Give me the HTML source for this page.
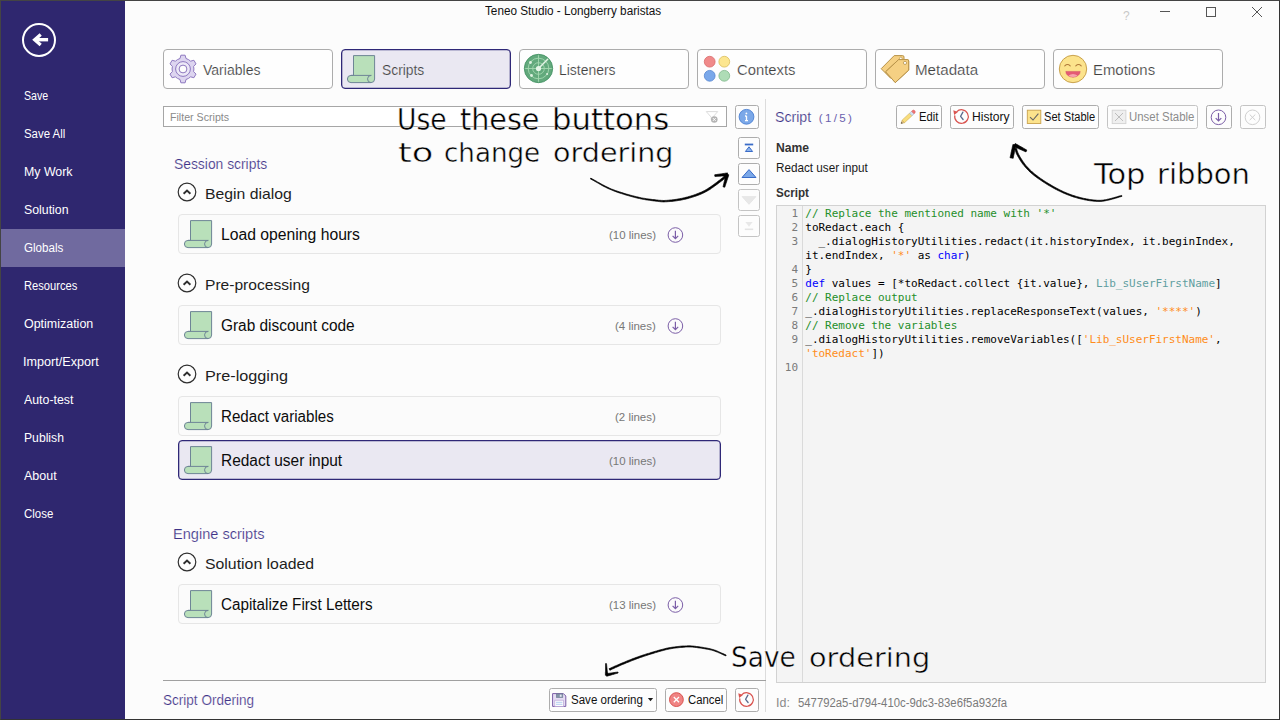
<!DOCTYPE html>
<html lang="en">
<head>
<meta charset="utf-8">
<title>Teneo Studio - Longberry baristas</title>
<style>
*{box-sizing:border-box;margin:0;padding:0}
html,body{width:1280px;height:720px;overflow:hidden;background:#fcfcfc}
body{font-family:"Liberation Sans","DejaVu Sans",sans-serif;color:#222;position:relative}
#win{position:absolute;left:0;top:0;width:1280px;height:720px;background:#fcfcfc;overflow:hidden}
#win div,#win svg,#win span{position:absolute}
#frame{left:0;top:0;width:1280px;height:720px;border:1px solid #444;border-right-color:#333;border-bottom-color:#333;pointer-events:none;z-index:50}
#side{left:1px;top:1px;width:124px;height:718px;background:#2f276f}
#side .sel{left:0;top:228px;width:124px;height:38px;background:#706a9f}
.t{white-space:pre;line-height:1;transform-origin:0 50%}
.tab{top:49px;width:170px;height:40px;border:1px solid #acacac;border-radius:4px;background:#fefefe}
.tab.on{border:1px solid #2f2877;background:#eae8f2;box-shadow:inset 0 0 0 .3px #2f2877}
.btn{border:1px solid #adadad;border-radius:2.5px;background:#fdfdfd}
.btn.dis{border-color:#c4c4c4}
.item{left:178px;width:543px;height:40px;border:1px solid #e6e6e6;border-radius:4px;background:#fbfbfb}
.item.on{border:1px solid #2f2877;background:#eae8f2;box-shadow:inset 0 0 0 .3px #2f2877}
#filter{left:163px;top:106px;width:564px;height:21px;border:1px solid #a6a6a6;background:#fff}
#vsep{left:765px;top:99px;width:1px;height:613px;background:#dcdcdc}
#hline{left:163px;top:680px;width:603px;height:1px;background:#a0a0a0}
#code{left:776px;top:205px;width:490px;height:478px;border:1px solid #d2d2d2;background:#f4f4f4}
#code .gsep{left:25px;top:0;width:1px;height:476px;background:#dadada}
.cl{white-space:pre;font-family:"DejaVu Sans Mono","Liberation Mono",monospace;font-size:11px;line-height:14px;height:14px;color:#000;letter-spacing:-0.015px}
.ln{color:#7a7a7a;text-align:right;width:22px;left:-1px}
.cm{color:#1f8f2a}.kw{color:#0000ff}.st{color:#ff8c1a}.lb{color:#5f9ea0}
.hand{font-family:"DejaVu Sans","Liberation Sans",sans-serif;color:#000;-webkit-text-stroke:0.45px #fcfcfc;white-space:pre;line-height:1;transform-origin:0 50%}
</style>
</head>
<body>
<div id="win">
  <div id="side"><div class="sel"></div>
    <svg style="left:18px;top:19px" width="40" height="40" viewBox="0 0 40 40"><circle cx="20" cy="20" r="16" fill="none" stroke="#fff" stroke-width="2"/><path d="M29.100 19.700H17" fill="none" stroke="#fff" stroke-width="3.400"/><path d="M21.700 14.500L15.700 19.700L21.700 24.900" fill="none" stroke="#fff" stroke-width="3.300" stroke-linejoin="miter"/></svg>
  </div>
  <!-- window controls -->
  <span class="t" style="left:1123px;top:10px;font-size:12px;color:#c8c8c8">?</span>
  <div style="left:1160px;top:11px;width:10px;height:1px;background:#555"></div>
  <div style="left:1206px;top:7px;width:10px;height:10px;border:1px solid #555"></div>
  <svg style="left:1251px;top:6px" width="12" height="12" viewBox="0 0 12 12"><path d="M1 1l10 10M11 1L1 11" stroke="#555" stroke-width="1" fill="none"/></svg>

  <!-- tabs -->
  <div class="tab" style="left:163px"></div>
  <div class="tab on" style="left:341px"></div>
  <div class="tab" style="left:519px"></div>
  <div class="tab" style="left:697px"></div>
  <div class="tab" style="left:875px"></div>
  <div class="tab" style="left:1053px"></div>
  <!-- gear -->
  <svg style="left:168px;top:54px" width="30" height="30" viewBox="-15 -15 30 30">
    <g fill="#ddd5f0" stroke="#8e78c0" stroke-width="1" stroke-linejoin="miter">
      <path d="M-3.00 -10.48L-2.10 -13.80L2.10 -13.80L3.00 -10.48A10.9 10.9 0 0 1 7.58 -7.84L10.90 -8.72L13.00 -5.08L10.58 -2.64A10.9 10.9 0 0 1 10.58 2.64L13.00 5.08L10.90 8.72L7.58 7.84A10.9 10.9 0 0 1 3.00 10.48L2.10 13.80L-2.10 13.80L-3.00 10.48A10.9 10.9 0 0 1 -7.58 7.84L-10.90 8.72L-13.00 5.08L-10.58 2.64A10.9 10.9 0 0 1 -10.58 -2.64L-13.00 -5.08L-10.90 -8.72L-7.58 -7.84A10.9 10.9 0 0 1 -3.00 -10.48Z"/>
      <circle r="7.400" fill="#ece8f7"/><circle r="3.900" fill="#fdfdfd"/>
    </g>
  </svg>
  <svg style="left:347px;top:55px" width="29" height="29" viewBox="0 0 29 29"><g fill="#b9e0ba" stroke="#6e8596" stroke-width="1" stroke-linejoin="round"><path d="M6.500 20.400V0.600H27.600V24a3.600 3.600 0 0 1 -3.600 3.600H4a3.600 3.600 0 0 1 0 -7.200Z"/><path d="M4 20.400H24.300M24.300 20.400a3.600 3.600 0 0 0 -0.300 7.200" fill="none"/></g></svg>
  <!-- radar -->
  <svg style="left:523px;top:53px" width="31" height="31" viewBox="-15.500 -15.500 31 31">
    <circle r="14.200" fill="#62a97c" stroke="#3f8f60" stroke-width="0.800"/>
    <g fill="none" stroke="#a4d8b0" stroke-width="0.900"><circle r="10.300"/><circle r="5.800"/><path d="M-13.300 0H13.300M0 -13.300V13.300"/></g>
    <path d="M0 0L9.200 -9.200" stroke="#e4f4e6" stroke-width="1.500" stroke-linecap="round"/>
    <circle r="2.600" fill="#e4f4e6"/><circle cx="-8" cy="-6" r="1.400" fill="#dff1e1"/><circle cx="-7" cy="7" r="1.400" fill="#dff1e1"/><circle cx="8.600" cy="5.600" r="1" fill="#dff1e1"/>
  </svg>
  <!-- contexts -->
  <svg style="left:703px;top:55px" width="28" height="28" viewBox="0 0 28 28">
    <circle cx="6.700" cy="6.700" r="5.400" fill="#f08a8a" stroke="#d96a6a" stroke-width="0.800"/>
    <circle cx="21.300" cy="6.700" r="5.400" fill="#fce68f" stroke="#d9bd5a" stroke-width="0.800"/>
    <circle cx="6.700" cy="20.800" r="5.400" fill="#7aa8ea" stroke="#5585d0" stroke-width="0.800"/>
    <circle cx="21.300" cy="20.800" r="5.400" fill="#aedcb6" stroke="#7fb88a" stroke-width="0.800"/>
  </svg>
  <!-- tags -->
  <svg style="left:880px;top:54px" width="30" height="30" viewBox="880 54 30 30">
    <g fill="#f5d083" stroke="#b8934a" stroke-width="1" stroke-linejoin="round">
      <path d="M894.200 55.600H902.600a1.400 1.400 0 0 1 1.400 1.400V66L891 78.600L881.200 68.700Z"/>
      <path d="M898.600 59.600H907.300a1.400 1.400 0 0 1 1.400 1.400V70.100L895.300 82.600L885.600 71.800Z"/>
    </g>
    <circle cx="900.800" cy="58.400" r="1.300" fill="#fdfdfd" stroke="#b8934a" stroke-width="0.700"/>
    <path d="M898.600 59.600H907.300a1.400 1.400 0 0 1 1.400 1.400V70.100L895.300 82.600L885.600 71.800Z" fill="#f5d083" stroke="#b8934a" stroke-width="1" stroke-linejoin="round"/>
    <circle cx="905" cy="62.900" r="1.600" fill="#fdfdfd" stroke="#b8934a" stroke-width="0.800"/>
  </svg>
  <!-- smiley -->
  <svg style="left:1058px;top:54px" width="30" height="30" viewBox="-15 -15 30 30">
    <circle r="13.700" fill="#fce38c" stroke="#c9a24e" stroke-width="1"/>
    <path d="M-8.200 -3.200q2.700 -2.600 5.400 0M2.800 -3.200q2.700 -2.600 5.400 0" fill="none" stroke="#b07a3a" stroke-width="1.100" stroke-linecap="round"/>
    <path d="M-7.200 2.400H7.200A7.200 5.800 0 0 1 -7.200 2.400Z" fill="#e45a74" stroke="#cf4a64" stroke-width="0.500"/>
    <path d="M-4.600 6.600Q0 3.600 4.600 6.600Q0 9.600 -4.600 6.600Z" fill="#f7a3ad"/>
  </svg>

  <!-- filter -->
  <div id="filter"></div>
  <svg style="left:704px;top:108px" width="18" height="18" viewBox="704 108 18 18">
    <path d="M706.300 111.600H717.700L712.800 117.200V121L711.200 119.800V117.200Z" fill="#fff" stroke="#d8d8d8" stroke-width="0.900" stroke-linejoin="round"/>
    <circle cx="714.300" cy="119.500" r="3.300" fill="#b4b4b4"/><path d="M712.900 118.100l2.800 2.800M715.700 118.100l-2.800 2.800" stroke="#fff" stroke-width="1"/>
  </svg>
  <div class="btn" style="left:735px;top:105px;width:24px;height:24px"></div>
  <svg style="left:738px;top:108px" width="18" height="18" viewBox="-9 -9 18 18"><circle cx="-0.500" cy="-0.200" r="7.400" fill="#7ba8e8" stroke="#4a7fd2" stroke-width="0.900"/><path d="M-0.500 -1V3.600M-2 -1H-0.500M-2 3.600H1" stroke="#fff" stroke-width="1.300" fill="none"/><circle cx="-0.600" cy="-3.600" r="0.900" fill="#fff"/></svg>
  <!-- order buttons -->
  <div class="btn" style="left:738px;top:137px;width:22px;height:22px"></div>
  <div class="btn" style="left:738px;top:163px;width:22px;height:22px"></div>
  <div class="btn dis" style="left:738px;top:189px;width:22px;height:22px"></div>
  <div class="btn dis" style="left:738px;top:215px;width:22px;height:22px"></div>
  <svg style="left:738px;top:137px" width="22" height="100" viewBox="738 137 22 100">
    <path d="M744.800 144.500H753.200" stroke="#3a6cc8" stroke-width="1.800"/>
    <path d="M749 146.800L752.600 151.500H745.400Z" fill="#8cb4ec" stroke="#3a6cc8" stroke-width="1" stroke-linejoin="round"/>
    <path d="M749 169.600L756 177.500H742Z" fill="#7ba8e8" stroke="#3a6cc8" stroke-width="1" stroke-linejoin="round"/>
    <path d="M749 204.400L756 196.600H742Z" fill="#e8e8e8" stroke="#e0e0e0" stroke-width="0.600"/>
    <path d="M749 226.800L752.600 222H745.400Z" fill="#e8e8e8"/><path d="M744.800 229.300H753.200" stroke="#e4e4e4" stroke-width="1.600"/>
  </svg>
  <div id="vsep"></div>
  <div id="hline"></div>
  <svg style="left:175.500px;top:181.4px" width="22" height="22" viewBox="-11 -11 22 22"><circle cx="0" cy="0" r="8.800" fill="#fdfdfd" stroke="#2e2e2e" stroke-width="1.200"/><path d="M-3.400 1.700L0 -1.500L3.400 1.700" fill="none" stroke="#2e2e2e" stroke-width="1.900"/></svg>
  <svg style="left:175.500px;top:272.4px" width="22" height="22" viewBox="-11 -11 22 22"><circle cx="0" cy="0" r="8.800" fill="#fdfdfd" stroke="#2e2e2e" stroke-width="1.200"/><path d="M-3.400 1.700L0 -1.500L3.400 1.700" fill="none" stroke="#2e2e2e" stroke-width="1.900"/></svg>
  <svg style="left:175.500px;top:363.4px" width="22" height="22" viewBox="-11 -11 22 22"><circle cx="0" cy="0" r="8.800" fill="#fdfdfd" stroke="#2e2e2e" stroke-width="1.200"/><path d="M-3.400 1.700L0 -1.500L3.400 1.700" fill="none" stroke="#2e2e2e" stroke-width="1.900"/></svg>
  <svg style="left:175.500px;top:551.4px" width="22" height="22" viewBox="-11 -11 22 22"><circle cx="0" cy="0" r="8.800" fill="#fdfdfd" stroke="#2e2e2e" stroke-width="1.200"/><path d="M-3.400 1.700L0 -1.500L3.400 1.700" fill="none" stroke="#2e2e2e" stroke-width="1.900"/></svg>
  <div class="item" style="top:214px"></div>
  <svg style="left:184px;top:220px" width="29" height="29" viewBox="0 0 29 29"><g fill="#b9e0ba" stroke="#6e8596" stroke-width="1" stroke-linejoin="round"><path d="M6.500 20.400V0.600H27.600V24a3.600 3.600 0 0 1 -3.600 3.600H4a3.600 3.600 0 0 1 0 -7.200Z"/><path d="M4 20.400H24.300M24.300 20.400a3.600 3.600 0 0 0 -0.300 7.200" fill="none"/></g></svg>
  <svg style="left:666px;top:225.5px" width="18" height="18" viewBox="-9 -9 18 18"><circle cx="0.400" cy="0" r="7.300" fill="none" stroke="#7b5ea7" stroke-width="1"/><path d="M0.400 -4.200V3.200M-2.400 0.800L0.400 3.600L3.200 0.800" fill="none" stroke="#7b5ea7" stroke-width="1.200"/></svg>
  <div class="item" style="top:305px"></div>
  <svg style="left:184px;top:311px" width="29" height="29" viewBox="0 0 29 29"><g fill="#b9e0ba" stroke="#6e8596" stroke-width="1" stroke-linejoin="round"><path d="M6.500 20.400V0.600H27.600V24a3.600 3.600 0 0 1 -3.600 3.600H4a3.600 3.600 0 0 1 0 -7.200Z"/><path d="M4 20.400H24.300M24.300 20.400a3.600 3.600 0 0 0 -0.300 7.200" fill="none"/></g></svg>
  <svg style="left:666px;top:316.5px" width="18" height="18" viewBox="-9 -9 18 18"><circle cx="0.400" cy="0" r="7.300" fill="none" stroke="#7b5ea7" stroke-width="1"/><path d="M0.400 -4.200V3.200M-2.400 0.800L0.400 3.600L3.200 0.800" fill="none" stroke="#7b5ea7" stroke-width="1.200"/></svg>
  <div class="item" style="top:396px"></div>
  <svg style="left:184px;top:402px" width="29" height="29" viewBox="0 0 29 29"><g fill="#b9e0ba" stroke="#6e8596" stroke-width="1" stroke-linejoin="round"><path d="M6.500 20.400V0.600H27.600V24a3.600 3.600 0 0 1 -3.600 3.600H4a3.600 3.600 0 0 1 0 -7.200Z"/><path d="M4 20.400H24.300M24.300 20.400a3.600 3.600 0 0 0 -0.300 7.200" fill="none"/></g></svg>
  <div class="item on" style="top:440px"></div>
  <svg style="left:184px;top:446px" width="29" height="29" viewBox="0 0 29 29"><g fill="#b9e0ba" stroke="#6e8596" stroke-width="1" stroke-linejoin="round"><path d="M6.500 20.400V0.600H27.600V24a3.600 3.600 0 0 1 -3.600 3.600H4a3.600 3.600 0 0 1 0 -7.200Z"/><path d="M4 20.400H24.300M24.300 20.400a3.600 3.600 0 0 0 -0.300 7.200" fill="none"/></g></svg>
  <div class="item" style="top:584px"></div>
  <svg style="left:184px;top:590px" width="29" height="29" viewBox="0 0 29 29"><g fill="#b9e0ba" stroke="#6e8596" stroke-width="1" stroke-linejoin="round"><path d="M6.500 20.400V0.600H27.600V24a3.600 3.600 0 0 1 -3.600 3.600H4a3.600 3.600 0 0 1 0 -7.200Z"/><path d="M4 20.400H24.300M24.300 20.400a3.600 3.600 0 0 0 -0.300 7.200" fill="none"/></g></svg>
  <svg style="left:666px;top:595.5px" width="18" height="18" viewBox="-9 -9 18 18"><circle cx="0.400" cy="0" r="7.300" fill="none" stroke="#7b5ea7" stroke-width="1"/><path d="M0.400 -4.200V3.200M-2.400 0.800L0.400 3.600L3.200 0.800" fill="none" stroke="#7b5ea7" stroke-width="1.200"/></svg>
  <!-- right toolbar -->
  <div class="btn" style="left:896px;top:105px;width:46px;height:24px"></div>
  <div class="btn" style="left:950px;top:105px;width:64px;height:24px"></div>
  <div class="btn" style="left:1022px;top:105px;width:77px;height:24px"></div>
  <div class="btn dis" style="left:1107px;top:105px;width:91px;height:24px"></div>
  <div class="btn" style="left:1206px;top:105px;width:26px;height:24px"></div>
  <div class="btn dis" style="left:1240px;top:105px;width:26px;height:24px"></div>
  <!-- pencil -->
  <svg style="left:899px;top:108px" width="18" height="18" viewBox="899 108 18 18">
    <path d="M901.00 123.60L904.53 122.69L902.14 120.14Z" fill="#e8c98a" stroke="#b8934a" stroke-width="0.500" stroke-linejoin="round"/>
    <path d="M901.00 123.60L902.75 123.13L901.59 121.89Z" fill="#3c3c3c"/>
    <path d="M904.53 122.69L911.98 115.72L909.59 113.17L902.14 120.14Z" fill="#f8dd7c" stroke="#d2ad48" stroke-width="0.6" stroke-linejoin="round"/>
    <path d="M911.98 115.72L914.02 113.81L911.63 111.25L909.59 113.17Z" fill="#d4e2f0" stroke="#9fb2c6" stroke-width="0.6" stroke-linejoin="round"/>
    <path d="M914.02 113.81L914.70 113.18A1.75 1.75 0 0 0 912.31 110.62L911.63 111.25Z" fill="#f07272" stroke="#d45a5a" stroke-width="0.500" stroke-linejoin="round"/>
  </svg>
  <svg style="left:952px;top:107px" width="19" height="19" viewBox="-9.500 -9.500 19 19"><g fill="none"><path d="M-4.900 -4.700A6.800 6.800 0 1 1 -6.700 -1.200" stroke="#d9534f" stroke-width="1.200"/><path d="M-7.300 -1.400L-8.200 -6.300L-3.600 -4.500Z" fill="#d9534f"/><path d="M1.400 -4.400L-0.900 -0.200L1.600 3" stroke="#5a6a8c" stroke-width="1.300" stroke-linecap="round" stroke-linejoin="round"/></g></svg>
  <!-- set stable -->
  <svg style="left:1026px;top:109px" width="16" height="16" viewBox="1026 109 16 16">
    <rect x="1027.300" y="110.200" width="13.500" height="13.300" fill="#fce38c" stroke="#c9a24e" stroke-width="0.900"/>
    <path d="M1030 117.200L1033 120L1038.400 113.600" fill="none" stroke="#666" stroke-width="1.100"/>
  </svg>
  <svg style="left:1111px;top:109px" width="16" height="16" viewBox="1111 109 16 16">
    <rect x="1112.200" y="110.200" width="13.700" height="13.400" fill="#efefef" stroke="#d2d2d2" stroke-width="0.900"/>
    <path d="M1115 113L1123 121M1123 113L1115 121" fill="none" stroke="#bdbdbd" stroke-width="1"/>
  </svg>
  <svg style="left:1209px;top:108px" width="19" height="19" viewBox="-9.500 -9.500 19 19"><circle cx="0" cy="-0.200" r="7.300" fill="none" stroke="#7b5ea7" stroke-width="1"/><path d="M0 -4.400V3M-2.800 0.600L0 3.400L2.800 0.600" fill="none" stroke="#7b5ea7" stroke-width="1.200"/></svg>
  <svg style="left:1243px;top:108px" width="19" height="19" viewBox="-9.500 -9.500 19 19"><circle cx="0" cy="-0.200" r="7.300" fill="none" stroke="#cfcfcf" stroke-width="1"/><path d="M-2.800 -3L2.800 2.600M2.800 -3L-2.800 2.600" fill="none" stroke="#cfcfcf" stroke-width="1"/></svg>

  <!-- bottom bar -->
  <div class="btn" style="left:549px;top:688px;width:108px;height:24px"></div>
  <div class="btn" style="left:665px;top:688px;width:62px;height:24px"></div>
  <div class="btn" style="left:735px;top:688px;width:24px;height:24px"></div>
  <svg style="left:551px;top:692px" width="17" height="17" viewBox="551 692 17 17">
    <path d="M552.600 693.600H563.400L565.800 696V706.400H552.600Z" fill="#e6ddf4" stroke="#7b5ea7" stroke-width="1" stroke-linejoin="round"/>
    <rect x="556.400" y="693.900" width="6.400" height="3.600" fill="#8493a8" stroke="#6a7890" stroke-width="0.600"/>
    <rect x="559.800" y="694.600" width="1.800" height="2.200" fill="#e4e9f0"/>
    <rect x="554.800" y="700.200" width="8.800" height="6.200" fill="#fdfdfd" stroke="#b9a5d8" stroke-width="0.700"/>
    <path d="M556 702.300H562.400M556 704.300H562.400" stroke="#9fc0ee" stroke-width="0.800"/>
  </svg>
  <svg style="left:647px;top:697px" width="7" height="5" viewBox="0 0 7 5"><path d="M0.900 1H6.100L3.500 4.300Z" fill="#1a1a1a"/></svg>
  <svg style="left:668px;top:691px" width="18" height="18" viewBox="-9 -9 18 18"><circle cx="-0.600" cy="-0.400" r="6.900" fill="#f08484" stroke="#d9534f" stroke-width="1"/><path d="M-3.200 -3L2 2.200M2 -3L-3.200 2.200" fill="none" stroke="#fff" stroke-width="1.300"/></svg>
  <svg style="left:736.900px;top:690px" width="19" height="19" viewBox="-9.500 -9.500 19 19"><g fill="none"><path d="M-4.900 -4.700A6.800 6.800 0 1 1 -6.700 -1.200" stroke="#d9534f" stroke-width="1.200"/><path d="M-7.300 -1.400L-8.200 -6.300L-3.600 -4.500Z" fill="#d9534f"/><path d="M1.400 -4.400L-0.900 -0.200L1.600 3" stroke="#5a6a8c" stroke-width="1.300" stroke-linecap="round" stroke-linejoin="round"/></g></svg>

  <!-- code -->
  <div id="code"><div class="gsep"></div>
    <div class="cl ln" style="top:1.2px">1</div>
    <div class="cl" style="left:28.3px;top:1.2px"><span class="cm" style="position:static">// Replace the mentioned name with &#x27;*&#x27;</span></div>
    <div class="cl ln" style="top:15.2px">2</div>
    <div class="cl" style="left:28.3px;top:15.2px">toRedact.each {</div>
    <div class="cl ln" style="top:29.2px">3</div>
    <div class="cl" style="left:28.3px;top:29.2px">  _.dialogHistoryUtilities.redact(it.historyIndex, it.beginIndex,</div>
    <div class="cl" style="left:28.3px;top:43.2px">it.endIndex, <span class="st" style="position:static">&#x27;*&#x27;</span> as <span class="kw" style="position:static">char</span>)</div>
    <div class="cl ln" style="top:57.2px">4</div>
    <div class="cl" style="left:28.3px;top:57.2px">}</div>
    <div class="cl ln" style="top:71.2px">5</div>
    <div class="cl" style="left:28.3px;top:71.2px"><span class="kw" style="position:static">def</span> values = [*toRedact.collect {it.value}, <span class="lb" style="position:static">Lib_sUserFirstName</span>]</div>
    <div class="cl ln" style="top:85.2px">6</div>
    <div class="cl" style="left:28.3px;top:85.2px"><span class="cm" style="position:static">// Replace output</span></div>
    <div class="cl ln" style="top:99.2px">7</div>
    <div class="cl" style="left:28.3px;top:99.2px">_.dialogHistoryUtilities.replaceResponseText(values, <span class="st" style="position:static">&#x27;****&#x27;</span>)</div>
    <div class="cl ln" style="top:113.2px">8</div>
    <div class="cl" style="left:28.3px;top:113.2px"><span class="cm" style="position:static">// Remove the variables</span></div>
    <div class="cl ln" style="top:127.2px">9</div>
    <div class="cl" style="left:28.3px;top:127.2px">_.dialogHistoryUtilities.removeVariables([<span class="st" style="position:static">&#x27;Lib_sUserFirstName&#x27;</span>,</div>
    <div class="cl" style="left:28.3px;top:141.2px"><span class="st" style="position:static">&#x27;toRedact&#x27;</span>])</div>
    <div class="cl ln" style="top:155.2px">10</div>
  </div>
  <!-- hand-drawn arrows -->
  <svg style="left:0;top:0;z-index:40" width="1280" height="720" viewBox="0 0 1280 720" fill="#000" stroke="#000" stroke-width="0.700" stroke-linejoin="round">
    <path d="M590.4 178.9L592.1 179.8L593.8 180.7L595.5 181.7L597.1 182.6L598.8 183.6L600.4 184.5L602.1 185.5L603.8 186.4L605.6 187.3L607.4 188.2L609.2 189.0L611.1 189.8L613.0 190.6L615.1 191.4L617.2 192.2L619.3 192.9L621.5 193.6L623.7 194.3L625.9 195.0L628.1 195.6L630.2 196.2L632.3 196.8L634.2 197.3L636.1 197.8L637.9 198.2L639.7 198.6L641.4 199.0L643.1 199.3L644.7 199.6L646.3 199.9L647.9 200.1L649.4 200.3L650.8 200.5L652.2 200.7L653.6 200.9L654.9 201.0L656.2 201.2L657.3 201.3L658.3 201.5L659.3 201.6L660.3 201.7L661.2 201.8L662.1 201.8L663.1 201.9L664.1 201.9L665.2 201.8L666.3 201.8L667.6 201.7L668.9 201.6L670.3 201.5L671.8 201.4L673.4 201.2L675.0 201.0L676.6 200.8L678.2 200.5L679.9 200.3L681.6 200.0L683.2 199.6L684.9 199.3L686.5 198.9L688.0 198.5L689.6 198.0L691.2 197.6L692.8 197.1L694.5 196.5L696.1 196.0L697.7 195.4L699.3 194.8L700.8 194.2L702.4 193.5L703.9 192.8L705.4 192.0L706.9 191.2L708.5 190.3L710.0 189.4L711.5 188.3L713.0 187.3L714.5 186.2L715.9 185.2L717.3 184.2L718.6 183.2L719.8 182.3L720.9 181.5L721.8 180.8L722.7 180.2L723.4 179.6L724.0 179.1L724.5 178.7L724.9 178.3L725.3 178.0L725.6 177.7L725.9 177.4L726.2 177.1L726.5 176.8L726.8 176.5L727.2 176.2L725.8 174.6L725.4 175.0L725.0 175.3L724.7 175.7L724.4 176.0L724.1 176.3L723.9 176.6L723.5 176.9L723.2 177.2L722.7 177.6L722.2 178.1L721.5 178.6L720.7 179.2L719.7 180.0L718.6 180.8L717.4 181.7L716.2 182.7L714.8 183.7L713.4 184.7L712.0 185.8L710.5 186.8L709.0 187.8L707.5 188.8L706.0 189.7L704.6 190.5L703.1 191.2L701.7 191.9L700.1 192.6L698.6 193.2L697.1 193.8L695.5 194.4L693.9 195.0L692.3 195.5L690.8 196.0L689.2 196.4L687.6 196.9L686.0 197.3L684.5 197.7L682.9 198.1L681.3 198.4L679.6 198.7L678.0 199.0L676.4 199.3L674.8 199.5L673.2 199.7L671.7 199.9L670.2 200.0L668.8 200.2L667.4 200.3L666.2 200.4L665.1 200.4L664.1 200.5L663.1 200.5L662.2 200.4L661.3 200.4L660.4 200.3L659.5 200.3L658.5 200.2L657.5 200.0L656.3 199.9L655.1 199.8L653.8 199.6L652.4 199.5L651.0 199.3L649.5 199.1L648.0 198.9L646.5 198.7L644.9 198.4L643.3 198.2L641.6 197.9L639.9 197.5L638.2 197.1L636.4 196.7L634.5 196.2L632.5 195.7L630.5 195.2L628.4 194.6L626.2 194.0L624.0 193.3L621.8 192.6L619.7 191.9L617.5 191.2L615.4 190.5L613.4 189.7L611.4 189.0L609.6 188.2L607.8 187.3L606.0 186.5L604.3 185.6L602.6 184.7L600.9 183.8L599.2 182.8L597.5 181.9L595.9 180.9L594.2 180.0L592.5 179.1L590.8 178.1Z"/>
    <path d="M727.5 172.9L726.4 173.1L725.3 173.2L724.3 173.4L723.2 173.5L722.2 173.7L721.1 173.9L720.0 174.0L719.0 174.2L717.9 174.3L716.8 174.5L715.8 174.6L714.7 174.8L714.9 176.4L715.9 176.4L717.0 176.3L718.1 176.3L719.2 176.2L720.2 176.2L721.3 176.1L722.4 176.1L723.5 176.1L724.5 176.0L725.6 176.0L726.7 175.9L727.7 175.9Z"/>
    <path d="M726.0 174.0L725.7 175.1L725.5 176.1L725.2 177.2L725.0 178.3L724.7 179.3L724.5 180.4L724.3 181.4L724.0 182.5L723.8 183.6L723.5 184.6L723.3 185.7L723.0 186.8L724.8 187.2L725.1 186.2L725.4 185.2L725.8 184.1L726.1 183.1L726.5 182.1L726.8 181.0L727.1 180.0L727.5 178.9L727.8 177.9L728.2 176.9L728.5 175.8L728.8 174.8Z"/>
    <path d="M1121.7 195.4L1120.4 195.8L1119.1 196.1L1117.7 196.5L1116.4 196.9L1115.1 197.3L1113.7 197.7L1112.4 198.0L1111.2 198.4L1109.9 198.7L1108.7 199.0L1107.6 199.2L1106.5 199.5L1105.5 199.7L1104.6 199.8L1103.7 200.0L1102.9 200.1L1102.2 200.2L1101.5 200.2L1100.7 200.3L1100.0 200.3L1099.2 200.3L1098.3 200.3L1097.4 200.3L1096.4 200.2L1095.4 200.1L1094.2 200.0L1093.0 199.9L1091.8 199.7L1090.5 199.6L1089.2 199.4L1087.9 199.1L1086.6 198.9L1085.2 198.6L1083.9 198.4L1082.6 198.1L1081.3 197.8L1080.1 197.5L1078.8 197.1L1077.6 196.8L1076.3 196.4L1075.0 196.0L1073.8 195.6L1072.5 195.2L1071.2 194.7L1070.0 194.3L1068.7 193.8L1067.4 193.3L1066.2 192.8L1064.9 192.2L1063.6 191.7L1062.4 191.1L1061.1 190.5L1059.9 189.9L1058.6 189.2L1057.4 188.6L1056.1 187.9L1054.8 187.2L1053.6 186.5L1052.3 185.8L1051.1 185.1L1049.8 184.3L1048.5 183.5L1047.2 182.7L1045.8 181.9L1044.5 181.0L1043.2 180.2L1041.9 179.3L1040.6 178.4L1039.4 177.5L1038.2 176.7L1037.1 175.8L1036.0 175.0L1034.9 174.2L1034.0 173.4L1033.0 172.6L1032.1 171.8L1031.3 171.0L1030.4 170.2L1029.6 169.4L1028.9 168.6L1028.1 167.8L1027.4 167.0L1026.6 166.2L1025.9 165.4L1025.2 164.5L1024.5 163.6L1023.9 162.7L1023.2 161.8L1022.6 160.9L1022.0 160.0L1021.4 159.0L1020.8 158.1L1020.3 157.3L1019.8 156.4L1019.4 155.6L1018.9 154.9L1018.6 154.2L1018.3 153.6L1018.0 153.0L1017.8 152.4L1017.6 151.9L1017.5 151.4L1017.3 150.9L1017.1 150.4L1017.0 149.8L1016.8 149.3L1016.6 148.8L1016.4 148.2L1014.8 148.8L1015.0 149.4L1015.1 149.9L1015.3 150.4L1015.5 150.9L1015.6 151.4L1015.8 151.9L1016.0 152.5L1016.2 153.1L1016.4 153.7L1016.7 154.3L1017.1 155.0L1017.5 155.7L1017.9 156.5L1018.4 157.3L1018.9 158.1L1019.4 159.0L1020.0 159.9L1020.6 160.9L1021.2 161.8L1021.9 162.8L1022.5 163.7L1023.2 164.6L1024.0 165.5L1024.7 166.4L1025.4 167.3L1026.2 168.1L1026.9 168.9L1027.7 169.7L1028.5 170.5L1029.3 171.4L1030.2 172.2L1031.1 173.0L1032.0 173.8L1033.0 174.6L1034.0 175.4L1035.0 176.2L1036.1 177.0L1037.3 177.9L1038.5 178.8L1039.8 179.6L1041.1 180.5L1042.4 181.4L1043.7 182.3L1045.1 183.1L1046.4 184.0L1047.7 184.8L1049.0 185.6L1050.3 186.3L1051.6 187.1L1052.9 187.8L1054.2 188.5L1055.4 189.2L1056.7 189.8L1058.0 190.5L1059.3 191.1L1060.5 191.7L1061.8 192.3L1063.1 192.9L1064.4 193.5L1065.6 194.0L1066.9 194.5L1068.2 195.0L1069.5 195.5L1070.8 196.0L1072.1 196.4L1073.3 196.9L1074.6 197.3L1075.9 197.6L1077.2 198.0L1078.5 198.4L1079.8 198.7L1081.1 199.0L1082.3 199.3L1083.7 199.6L1085.0 199.9L1086.3 200.1L1087.7 200.4L1089.0 200.6L1090.3 200.8L1091.6 200.9L1092.9 201.1L1094.1 201.2L1095.3 201.3L1096.4 201.4L1097.4 201.4L1098.3 201.5L1099.2 201.5L1100.0 201.5L1100.8 201.4L1101.5 201.4L1102.3 201.3L1103.1 201.2L1103.9 201.1L1104.8 200.9L1105.7 200.7L1106.7 200.5L1107.8 200.3L1109.0 200.0L1110.2 199.7L1111.4 199.4L1112.7 199.0L1114.0 198.7L1115.4 198.3L1116.7 197.9L1118.0 197.5L1119.3 197.1L1120.7 196.7L1121.9 196.4Z"/>
    <path d="M1012.9 144.5L1012.7 145.6L1012.4 146.7L1012.2 147.8L1012.0 148.9L1011.7 150.0L1011.5 151.1L1011.2 152.2L1011.0 153.3L1010.8 154.4L1010.5 155.5L1010.3 156.6L1010.0 157.7L1013.2 158.3L1013.4 157.2L1013.6 156.1L1013.8 155.0L1014.1 153.9L1014.3 152.8L1014.5 151.7L1014.7 150.6L1015.0 149.5L1015.2 148.4L1015.4 147.3L1015.6 146.2L1015.9 145.1Z"/>
    <path d="M1013.6 146.5L1014.7 147.0L1015.7 147.4L1016.7 147.9L1017.7 148.3L1018.8 148.8L1019.8 149.2L1020.8 149.7L1021.8 150.1L1022.9 150.6L1023.9 151.0L1024.9 151.4L1026.0 151.9L1026.8 150.1L1025.9 149.6L1024.9 149.0L1023.9 148.4L1023.0 147.9L1022.0 147.3L1021.0 146.8L1020.0 146.2L1019.1 145.7L1018.1 145.1L1017.1 144.6L1016.1 144.0L1015.2 143.5Z"/>
    <path d="M726.2 655.1L725.1 654.6L724.0 654.1L723.0 653.6L721.9 653.2L720.9 652.7L719.8 652.2L718.7 651.7L717.6 651.2L716.5 650.7L715.4 650.3L714.2 649.9L712.9 649.5L711.7 649.2L710.3 648.8L708.9 648.5L707.5 648.2L706.0 647.9L704.5 647.7L703.1 647.4L701.7 647.2L700.3 647.0L698.9 646.8L697.7 646.6L696.5 646.5L695.4 646.3L694.4 646.2L693.5 646.1L692.6 646.0L691.8 645.9L691.0 645.9L690.2 645.8L689.3 645.8L688.5 645.8L687.6 645.8L686.6 645.9L685.5 645.9L684.3 646.0L683.0 646.0L681.7 646.1L680.4 646.2L679.0 646.4L677.6 646.5L676.1 646.7L674.7 646.9L673.2 647.1L671.8 647.3L670.4 647.5L669.0 647.8L667.6 648.0L666.2 648.3L664.8 648.7L663.5 649.0L662.1 649.4L660.7 649.7L659.3 650.1L658.0 650.5L656.6 650.9L655.2 651.3L653.9 651.7L652.5 652.1L651.1 652.5L649.8 653.0L648.4 653.4L647.0 653.8L645.6 654.2L644.3 654.7L642.9 655.1L641.5 655.6L640.2 656.0L638.8 656.5L637.4 657.0L636.0 657.5L634.6 658.0L633.2 658.5L631.8 659.1L630.3 659.7L628.9 660.2L627.4 660.8L626.0 661.4L624.6 662.0L623.3 662.5L622.0 663.1L620.7 663.6L619.6 664.1L618.5 664.5L617.5 665.0L616.5 665.4L615.7 665.8L614.8 666.1L614.0 666.5L613.2 666.9L612.4 667.2L611.6 667.6L610.8 668.0L610.0 668.3L609.1 668.7L609.9 670.3L610.7 669.9L611.5 669.5L612.3 669.1L613.1 668.8L613.9 668.4L614.7 668.0L615.5 667.6L616.3 667.3L617.2 666.9L618.1 666.4L619.1 666.0L620.2 665.5L621.4 665.0L622.6 664.5L623.9 664.0L625.2 663.4L626.6 662.8L628.0 662.3L629.5 661.7L630.9 661.1L632.3 660.5L633.8 660.0L635.2 659.4L636.6 658.9L637.9 658.4L639.3 657.9L640.6 657.4L642.0 657.0L643.4 656.5L644.7 656.1L646.1 655.6L647.4 655.2L648.8 654.7L650.2 654.3L651.5 653.9L652.9 653.5L654.3 653.1L655.6 652.6L657.0 652.2L658.4 651.8L659.7 651.4L661.1 651.0L662.4 650.7L663.8 650.3L665.2 649.9L666.5 649.6L667.9 649.3L669.2 649.0L670.6 648.8L672.0 648.5L673.4 648.3L674.9 648.1L676.3 647.9L677.7 647.8L679.1 647.6L680.5 647.5L681.8 647.4L683.1 647.3L684.4 647.2L685.5 647.1L686.6 647.0L687.6 647.0L688.5 647.0L689.3 647.0L690.1 647.0L690.9 647.0L691.7 647.1L692.5 647.1L693.4 647.2L694.3 647.3L695.2 647.4L696.3 647.5L697.5 647.7L698.8 647.9L700.1 648.0L701.5 648.2L702.9 648.5L704.4 648.7L705.8 649.0L707.3 649.2L708.7 649.5L710.1 649.8L711.4 650.1L712.7 650.5L713.9 650.8L715.0 651.2L716.1 651.7L717.3 652.1L718.3 652.6L719.4 653.0L720.5 653.5L721.5 654.0L722.6 654.5L723.6 655.0L724.7 655.4L725.8 655.9Z"/>
    <path d="M607.8 675.1L607.7 674.2L607.6 673.2L607.5 672.2L607.3 671.3L607.2 670.3L607.1 669.4L607.0 668.4L606.9 667.4L606.8 666.5L606.7 665.5L606.6 664.5L606.4 663.6L605.6 663.6L605.5 664.6L605.5 665.6L605.5 666.5L605.5 667.5L605.5 668.5L605.5 669.4L605.5 670.4L605.5 671.4L605.4 672.4L605.4 673.3L605.4 674.3L605.4 675.3Z"/>
    <path d="M606.7 676.3L607.6 676.0L608.6 675.7L609.5 675.5L610.5 675.2L611.4 674.9L612.4 674.6L613.3 674.4L614.3 674.1L615.2 673.8L616.2 673.5L617.2 673.3L618.1 673.0L617.9 672.0L616.9 672.2L615.9 672.3L615.0 672.4L614.0 672.6L613.0 672.7L612.0 672.9L611.0 673.0L610.0 673.2L609.1 673.3L608.1 673.4L607.1 673.6L606.1 673.7Z"/>
  </svg>

<span class="t" style="left:24.09px;top:90.30px;font-size:12px;color:#fff;transform:scaleX(0.8859);">Save</span>
<span class="t" style="left:24.04px;top:128.30px;font-size:12px;color:#fff;transform:scaleX(0.9511);">Save All</span>
<span class="t" style="left:23.89px;top:166.30px;font-size:12px;color:#fff;transform:scaleX(1.0307);">My Work</span>
<span class="t" style="left:23.98px;top:204.30px;font-size:12px;color:#fff;transform:scaleX(1.0270);">Solution</span>
<span class="t" style="left:24.16px;top:242.30px;font-size:12px;color:#fff;transform:scaleX(0.9650);">Globals</span>
<span class="t" style="left:23.98px;top:280.30px;font-size:12px;color:#fff;transform:scaleX(0.9293);">Resources</span>
<span class="t" style="left:24.17px;top:318.30px;font-size:12px;color:#fff;transform:scaleX(1.0381);">Optimization</span>
<span class="t" style="left:23.49px;top:356.30px;font-size:12px;color:#fff;transform:scaleX(1.0509);">Import/Export</span>
<span class="t" style="left:24.47px;top:394.30px;font-size:12px;color:#fff;transform:scaleX(1.0289);">Auto-test</span>
<span class="t" style="left:23.90px;top:432.30px;font-size:12px;color:#fff;transform:scaleX(1.0136);">Publish</span>
<span class="t" style="left:24.47px;top:470.30px;font-size:12px;color:#fff;transform:scaleX(1.0402);">About</span>
<span class="t" style="left:24.17px;top:508.30px;font-size:12px;color:#fff;transform:scaleX(0.9531);">Close</span>
<span class="t" style="left:485.28px;top:5.30px;font-size:12px;color:#111;transform:scaleX(0.9785);">Teneo Studio - Longberry baristas</span>
<span class="t" style="left:203.38px;top:62.30px;font-size:15.4px;color:#404040;transform:scaleX(0.9115);-webkit-text-stroke:0.2px #fefefe;">Variables</span>
<span class="t" style="left:381.70px;top:62.30px;font-size:15.4px;color:#404040;transform:scaleX(0.8978);-webkit-text-stroke:0.2px #eae8f2;">Scripts</span>
<span class="t" style="left:559.10px;top:62.30px;font-size:15.4px;color:#404040;transform:scaleX(0.9050);-webkit-text-stroke:0.2px #fefefe;">Listeners</span>
<span class="t" style="left:737.34px;top:62.30px;font-size:15.4px;color:#404040;transform:scaleX(0.9620);-webkit-text-stroke:0.2px #fefefe;">Contexts</span>
<span class="t" style="left:915.10px;top:62.30px;font-size:15.4px;color:#404040;transform:scaleX(0.9832);-webkit-text-stroke:0.2px #fefefe;">Metadata</span>
<span class="t" style="left:1093.12px;top:62.30px;font-size:15.4px;color:#404040;transform:scaleX(0.9681);-webkit-text-stroke:0.2px #fefefe;">Emotions</span>
<span class="t" style="left:169.55px;top:112.30px;font-size:11px;color:#8a8a8a;transform:scaleX(0.9665);">Filter Scripts</span>
<span class="t" style="left:173.60px;top:156.30px;font-size:15.4px;color:#3f3388;transform:scaleX(0.9001);-webkit-text-stroke:0.2px #fcfcfc;">Session scripts</span>
<span class="t" style="left:172.59px;top:526.30px;font-size:15.4px;color:#3f3388;transform:scaleX(0.9471);-webkit-text-stroke:0.2px #fcfcfc;">Engine scripts</span>
<span class="t" style="left:204.74px;top:186.30px;font-size:15px;color:#1e1e1e;transform:scaleX(1.0503);">Begin dialog</span>
<span class="t" style="left:204.75px;top:277.30px;font-size:15px;color:#1e1e1e;transform:scaleX(1.0389);">Pre-processing</span>
<span class="t" style="left:204.70px;top:368.30px;font-size:15px;color:#1e1e1e;transform:scaleX(1.0813);">Pre-logging</span>
<span class="t" style="left:205.17px;top:556.30px;font-size:15px;color:#1e1e1e;transform:scaleX(1.0550);">Solution loaded</span>
<span class="t" style="left:220.87px;top:227.30px;font-size:16px;color:#0c0c0c;transform:scaleX(0.9824);">Load opening hours</span>
<span class="t" style="left:221.44px;top:318.30px;font-size:16px;color:#0c0c0c;transform:scaleX(0.9632);">Grab discount code</span>
<span class="t" style="left:220.92px;top:409.30px;font-size:16px;color:#0c0c0c;transform:scaleX(0.9464);">Redact variables</span>
<span class="t" style="left:220.89px;top:453.30px;font-size:16px;color:#0c0c0c;transform:scaleX(0.9662);">Redact user input</span>
<span class="t" style="left:221.45px;top:597.30px;font-size:16px;color:#0c0c0c;transform:scaleX(0.9518);">Capitalize First Letters</span>
<span class="t" style="left:609.27px;top:229.30px;font-size:11.7px;color:#777;transform:scaleX(0.9808);">(10 lines)</span>
<span class="t" style="left:615.47px;top:320.30px;font-size:11.7px;color:#777;transform:scaleX(0.9811);">(4 lines)</span>
<span class="t" style="left:615.47px;top:411.30px;font-size:11.7px;color:#777;transform:scaleX(0.9811);">(2 lines)</span>
<span class="t" style="left:609.27px;top:455.30px;font-size:11.7px;color:#777;transform:scaleX(0.9808);">(10 lines)</span>
<span class="t" style="left:609.27px;top:599.30px;font-size:11.7px;color:#777;transform:scaleX(0.9808);">(13 lines)</span>
<span class="t" style="left:163.37px;top:693.30px;font-size:14px;color:#3f3388;transform:scaleX(0.9677);-webkit-text-stroke:0.2px #fcfcfc;">Script Ordering</span>
<span class="t" style="left:774.53px;top:109.30px;font-size:15.2px;color:#3f3388;transform:scaleX(0.9318);-webkit-text-stroke:0.2px #fcfcfc;">Script</span>
<span class="t" style="left:818.75px;top:112.30px;font-size:11.6px;color:#6a60ad;letter-spacing:2.313px;">(1/5)</span>
<span class="t" style="left:776.07px;top:142.30px;font-size:12px;color:#333;transform:scaleX(1.0110);font-weight:700;">Name</span>
<span class="t" style="left:775.93px;top:163.30px;font-size:11.9px;color:#1a1a1a;transform:scaleX(0.9849);">Redact user input</span>
<span class="t" style="left:776.15px;top:187.30px;font-size:12px;color:#333;transform:scaleX(0.9685);font-weight:700;">Script</span>
<span class="t" style="left:775.55px;top:697.30px;font-size:12px;color:#8a8a8a;transform:scaleX(1.0422);">Id:</span>
<span class="t" style="left:797.51px;top:697.30px;font-size:12px;color:#7a7a7a;transform:scaleX(0.9437);">547792a5-d794-410c-9dc3-83e6f5a932fa</span>
<span class="t" style="left:918.77px;top:111.30px;font-size:12px;color:#111;transform:scaleX(0.9342);">Edit</span>
<span class="t" style="left:972.21px;top:111.30px;font-size:12px;color:#111;transform:scaleX(1.0074);">History</span>
<span class="t" style="left:1044.16px;top:111.30px;font-size:12px;color:#111;transform:scaleX(0.9245);">Set Stable</span>
<span class="t" style="left:1129.29px;top:111.30px;font-size:12px;color:#8c8c8c;transform:scaleX(0.9526);">Unset Stable</span>
<span class="t" style="left:571.23px;top:694.30px;font-size:12px;color:#111;transform:scaleX(0.9616);">Save ordering</span>
<span class="t" style="left:687.78px;top:694.30px;font-size:12px;color:#111;transform:scaleX(0.9448);">Cancel</span>
<span class="t hand" style="left:396.77px;top:105.30px;font-size:30px;color:#000;transform:scaleX(0.8858);">Use</span>
<span class="t hand" style="left:459.87px;top:105.30px;font-size:30px;color:#000;transform:scaleX(0.9537);">these</span>
<span class="t hand" style="left:551.57px;top:105.30px;font-size:30px;color:#000;transform:scaleX(1.0236);">buttons</span>
<span class="t hand" style="left:398.06px;top:139.30px;font-size:27px;color:#000;transform:scaleX(1.3055);">to</span>
<span class="t hand" style="left:444.12px;top:139.30px;font-size:27px;color:#000;transform:scaleX(0.9670);">change</span>
<span class="t hand" style="left:553.38px;top:139.30px;font-size:27px;color:#000;transform:scaleX(1.0588);">ordering</span>
<span class="t hand" style="left:1093.56px;top:161.30px;font-size:28px;color:#000;transform:scaleX(1.0891);">Top</span>
<span class="t hand" style="left:1157.18px;top:161.30px;font-size:28px;color:#000;transform:scaleX(1.0362);">ribbon</span>
<span class="t hand" style="left:731.08px;top:644.30px;font-size:28px;color:#000;transform:scaleX(0.9419);">Save</span>
<span class="t hand" style="left:809.07px;top:644.30px;font-size:27px;color:#000;transform:scaleX(1.0656);">ordering</span>
  <div id="frame"></div>
</div>
</body>
</html>
